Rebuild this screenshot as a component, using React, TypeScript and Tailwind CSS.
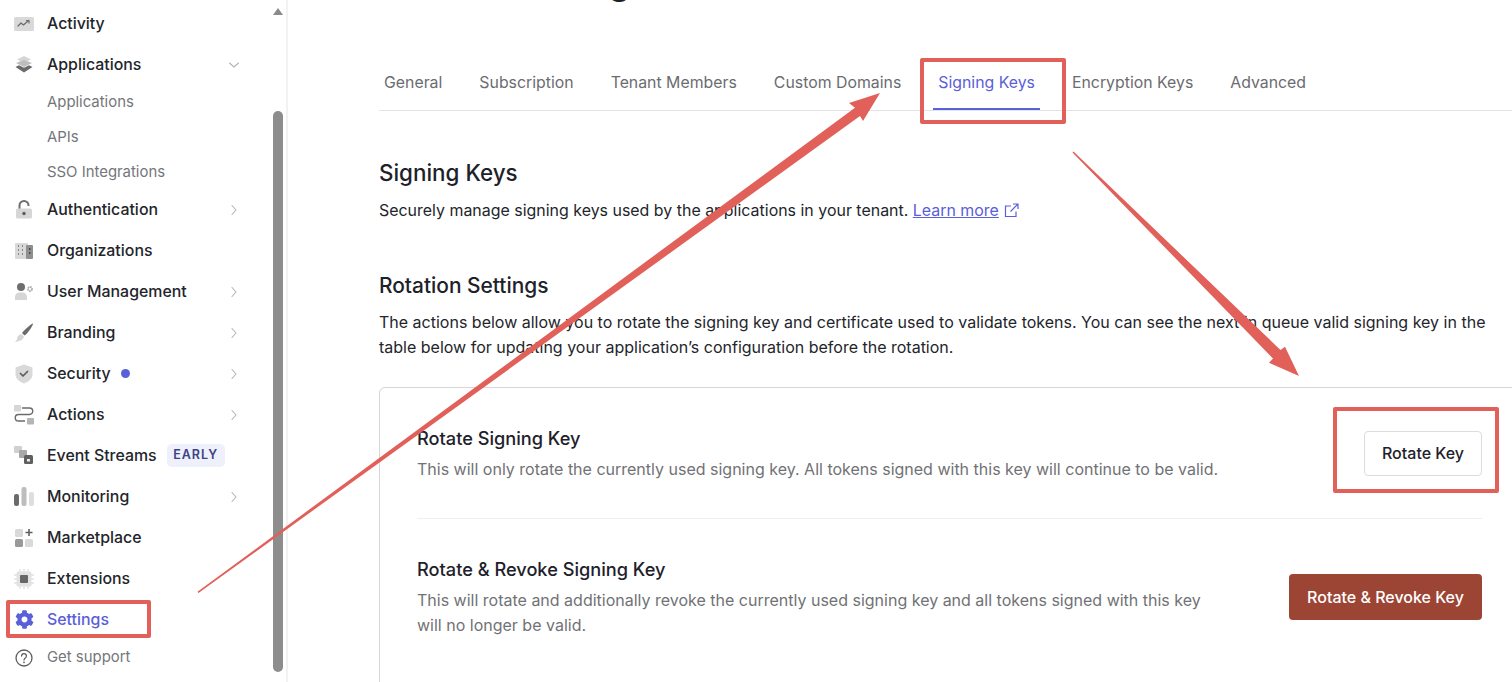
import React from "react";
import { FaCog } from "react-icons/fa";

const Chevron = ({ down }: { down?: boolean }) => (
  <svg width="12" height="12" viewBox="0 0 12 12" fill="none" stroke="#b4b4b8" strokeWidth="1.1" strokeLinecap="round" strokeLinejoin="round">
    {down ? <path d="M1.5 4l4.5 4 4.5-4" /> : <path d="M4 1.5l4 4.5-4 4.5" />}
  </svg>
);

const I = ({ children }: { children: React.ReactNode }) => (
  <svg width="20" height="20" viewBox="0 0 20 20" fill="none">{children}</svg>
);

const icons: Record<string, React.ReactNode> = {
  activity: (
    <I>
      <rect x="0" y="3" width="20" height="14" rx="1.5" fill="#d9d9d9" />
      <path d="M4 12l3-3 2.5 2 5-4.5M12.5 6.5H15V9" stroke="#6b6b6b" strokeWidth="1.2" fill="none" strokeLinecap="round" strokeLinejoin="round" />
    </I>
  ),
  apps: (
    <I>
      <path d="M10 1l7 3.5-7 3.5-7-3.5z" fill="#d6d6d6" />
      <path d="M2 8l8-3 8 3-8 4z" fill="#bdbdbd" />
      <path d="M1.5 12L5 10.3l5 2.5 5-2.5 3.5 1.7L10 17.5z" fill="#6b6b6b" />
    </I>
  ),
  auth: (
    <I>
      <path d="M5.5 9V5.5a4.5 4.5 0 0 1 9 0V6" stroke="#6e6e6e" strokeWidth="2" fill="none" />
      <rect x="2" y="8.5" width="16" height="10" rx="1.5" fill="#d6d6d6" />
      <circle cx="10" cy="13.5" r="1.7" fill="#5c5c5c" />
    </I>
  ),
  orgs: (
    <I>
      <rect x="1" y="2" width="13" height="16" rx="1" fill="#d9d9d9" />
      <rect x="12" y="4" width="7" height="14" rx="1" fill="#8f8f8f" />
      <path d="M4 5h1M8 5h1M4 9h1M8 9h1M4 13h1M8 13h1" stroke="#6b6b6b" strokeWidth="1.7" />
      <path d="M15 8h1.5M15 12h1.5" stroke="#333" strokeWidth="1.5" />
    </I>
  ),
  users: (
    <I>
      <circle cx="7" cy="5" r="4" fill="#6e6e6e" />
      <path d="M1 18v-3a4.5 4.5 0 0 1 4.5-4.5h3A4.5 4.5 0 0 1 13 15v3z" fill="#d6d6d6" />
      <circle cx="16" cy="7" r="2" stroke="#b0b0b0" strokeWidth="1.8" strokeDasharray="1.6 .5" fill="none" />
    </I>
  ),
  brush: (
    <I>
      <path d="M19 .5c.5 1-5 10-8.5 12L8 10C10 7 17.5.5 19 .5z" fill="#6b6b6b" />
      <path d="M7 11l3 2.5c-.5 3-4 5-9 5.5 2-1.5 2-3 2.5-5 .5-1.5 2-2.5 3.5-3z" fill="#d6d6d6" />
    </I>
  ),
  shield: (
    <I>
      <path d="M10 .5l8.5 3v7c0 4-4 7.5-8.5 9-4.5-1.5-8.5-5-8.5-9v-7z" fill="#d9d9d9" />
      <path d="M6.5 9.5l2.5 2.5 4.5-4.5" stroke="#5c5c5c" strokeWidth="1.7" fill="none" strokeLinecap="round" strokeLinejoin="round" />
    </I>
  ),
  actions: (
    <I>
      <rect x="0" y="0" width="7" height="6.5" rx="1" fill="#d6d6d6" />
      <rect x="13" y="13" width="7" height="6.5" rx="1" fill="#b5b5b5" />
      <path d="M8 3h7.5a2.8 2.8 0 0 1 0 6.5h-11a3.2 3.2 0 0 0 0 6.5H11" stroke="#6b6b6b" strokeWidth="1.4" fill="none" />
    </I>
  ),
  streams: (
    <I>
      <rect x="0" y="0" width="8" height="7" rx="1" fill="#d0d0d0" />
      <rect x="5" y="4" width="8" height="8" rx="1" fill="#a8a8a8" />
      <rect x="10" y="9" width="9" height="9" rx="1.5" fill="#5f5f5f" />
      <rect x="13" y="13" width="3" height="2.5" fill="#eee" />
    </I>
  ),
  monitor: (
    <I>
      <rect x="0" y="7" width="5" height="12" rx="2" fill="#6b6b6b" />
      <rect x="7.5" y="0" width="5" height="19" rx="2" fill="#bdbdbd" />
      <rect x="15" y="5" width="5" height="14" rx="2" fill="#dedede" />
    </I>
  ),
  market: (
    <I>
      <rect x="1" y="1" width="8" height="8" rx="1.5" fill="#d9d9d9" />
      <rect x="1" y="11" width="8" height="8" rx="1.5" fill="#999" />
      <rect x="11" y="11" width="8" height="8" rx="1.5" fill="#d9d9d9" />
      <path d="M15 1v7M11.5 4.5h7" stroke="#5f5f5f" strokeWidth="1.6" />
    </I>
  ),
  ext: (
    <I>
      <rect x="2.5" y="2.5" width="15" height="15" rx="1.5" fill="#e2e2e2" />
      <path d="M6 0v20M10 0v20M14 0v20M0 6h20M0 10h20M0 14h20" stroke="#e2e2e2" strokeWidth="1.3" />
      <rect x="6" y="6" width="8" height="8" rx="1" fill="#666" />
    </I>
  ),
  help: (
    <I>
      <circle cx="10" cy="10" r="8" stroke="#5c5c5c" strokeWidth="1.3" fill="none" />
      <path d="M7.6 8a2.4 2.4 0 1 1 3.7 2c-.9.6-1.3 1-1.3 1.9" stroke="#5c5c5c" strokeWidth="1.3" fill="none" strokeLinecap="round" />
      <circle cx="10" cy="14.3" r=".9" fill="#5c5c5c" />
    </I>
  ),
};

type Item = { icon: string; label: string; chev?: "r" | "d"; dot?: boolean; badge?: string };

const Row = ({ icon, label, chev, dot, badge }: Item) => (
  <div className="flex items-center h-[41px] pl-[14px] pr-[30px]">
    <span className="w-[33px] flex-none flex items-center">{icons[icon]}</span>
    <span className="text-[15.9px] font-medium text-[#23252b] whitespace-nowrap">{label}</span>
    {dot && <span className="ml-[10px] w-[9px] h-[9px] rounded-full bg-[#5a60d8]" />}
    {badge && (
      <span className="ml-[10px] h-[23px] w-[58px] flex items-center justify-center rounded-[5px] bg-[#eef0fb] text-[#3d4285] text-[12.5px] font-semibold tracking-[1px]">
        {badge}
      </span>
    )}
    <span className="flex-1" />
    {chev && <Chevron down={chev === "d"} />}
  </div>
);

const Sub = ({ label }: { label: string }) => (
  <div className="h-[35px] pl-[47px] flex items-center text-[14.9px] text-[#75767b]">{label}</div>
);

const Tab = ({ label, active }: { label: string; active?: boolean }) => (
  <div className={`relative h-[54px] px-[5px] mr-[27px] flex items-center text-[15.85px] whitespace-nowrap ${active ? "text-[#5a60d8]" : "text-[#6b6c70]"}`}>
    {label}
    {active && <span className="absolute left-0 right-0 bottom-0 h-[2px] bg-[#5a60d8]" />}
  </div>
);

export default function App() {
  return (
    <div className="relative flex w-[1512px] h-[682px] overflow-hidden bg-white font-['Inter',sans-serif]">
      <aside className="flex-none flex w-[288px] h-[682px] border-r-2 border-[#f2f2f2]">
        <nav className="w-[270px] mt-[3px]">
          <Row icon="activity" label="Activity" />
          <Row icon="apps" label="Applications" chev="d" />
          <Sub label="Applications" />
          <Sub label="APIs" />
          <Sub label="SSO Integrations" />
          <div className="-mt-[1px]" />
          <Row icon="auth" label="Authentication" chev="r" />
          <Row icon="orgs" label="Organizations" />
          <Row icon="users" label="User Management" chev="r" />
          <Row icon="brush" label="Branding" chev="r" />
          <Row icon="shield" label="Security" chev="r" dot />
          <Row icon="actions" label="Actions" chev="r" />
          <Row icon="streams" label="Event Streams" badge="EARLY" />
          <Row icon="monitor" label="Monitoring" chev="r" />
          <Row icon="market" label="Marketplace" />
          <Row icon="ext" label="Extensions" />
          <div className="flex items-center h-[41px] pl-[14px]">
            <span className="w-[33px] pl-[1px] flex-none flex items-center">
              <FaCog size={19} color="#5a60d8" />
            </span>
            <span className="text-[15.9px] font-medium text-[#5a60d8]">Settings</span>
          </div>
          <div className="flex items-center h-[35px] pl-[14px]">
            <span className="w-[33px] flex-none flex items-center">{icons.help}</span>
            <span className="text-[14.9px] text-[#75767b]">Get support</span>
          </div>
        </nav>
        <div className="w-[10px] ml-[3px] flex flex-col items-center pt-[8px]">
          <div className="w-0 h-0 border-l-[5px] border-r-[5px] border-b-[7px] border-l-transparent border-r-transparent border-b-[#8a8a8a]" />
          <div className="mt-[96px] w-[10px] flex-none h-[561px] rounded-[5px] bg-[#8d8d8d]" />
        </div>
      </aside>

      <main className="flex-1 min-w-0 pl-[91px]">
        <div className="-mt-[43px] h-[56px] text-[36.5px] font-medium leading-[48px] text-[#1e212a] whitespace-nowrap">Tenant Settings</div>
        <div className="flex h-[55px] mt-[43px] border-b border-[#e4e4e6] -mr-[20px]">
          <Tab label="General" />
          <Tab label="Subscription" />
          <Tab label="Tenant Members" />
          <Tab label="Custom Domains" />
          <Tab label="Signing Keys" active />
          <Tab label="Encryption Keys" />
          <Tab label="Advanced" />
        </div>

        <h2 className="mt-[45px] text-[22.4px] leading-[34px] font-medium text-[#1e212a]">Signing Keys</h2>
        <p className="mt-[8px] text-[15.95px] leading-[26px] text-[#23252b]">
          Securely manage signing keys used by the applications in your tenant.{" "}
          <span className="text-[#5a60d8] underline">Learn more</span>
          <svg className="inline-block ml-[5px] -mt-[3px]" width="15" height="15" viewBox="0 0 15 15" fill="none" stroke="#5a60d8" strokeWidth="1.2">
            <path d="M12 8.5V13.5H1.5V3H7M9 1h5v5M14 1L6.5 8.5" />
          </svg>
        </p>

        <h2 className="mt-[46px] text-[20.9px] leading-[32px] font-medium text-[#1e212a]">Rotation Settings</h2>
        <p className="mt-[8px] w-[1125px] text-[16px] leading-[25px] text-[#23252b]">
          The actions below allow you to rotate the signing key and certificate used to validate tokens. You can see the next in queue valid signing key in the table below for updating your application’s configuration before the rotation.
        </p>

        <section className="mt-[27px] w-[1140px] h-[320px] rounded-t-[6px] border border-[#d6d6d8] pl-[37px] pr-[36px]">
          <div className="flex items-center justify-between h-[131px] border-b border-[#efefef]">
            <div>
              <h3 className="text-[18.2px] leading-[24px] font-medium text-[#1e212a]">Rotate Signing Key</h3>
              <p className="mt-[7px] text-[16px] leading-[24px] text-[#717275]">
                This will only rotate the currently used signing key. All tokens signed with this key will continue to be valid.
              </p>
            </div>
            <button className="h-[45px] w-[118px] rounded-[4px] border border-[#dcdcde] bg-white text-[16px] font-medium text-[#1e212a]">Rotate Key</button>
          </div>
          <div className="flex items-center justify-between h-[156px]">
            <div>
              <h3 className="text-[18.2px] leading-[24px] font-medium text-[#1e212a]">Rotate &amp; Revoke Signing Key</h3>
              <p className="mt-[7px] w-[800px] text-[16px] leading-[25px] text-[#717275]">
                This will rotate and additionally revoke the currently used signing key and all tokens signed with this key will no longer be valid.
              </p>
            </div>
            <button className="h-[46px] w-[193px] rounded-[4px] bg-[#9c4535] text-[16px] font-medium text-white">Rotate &amp; Revoke Key</button>
          </div>
        </section>
      </main>

      {/* annotations */}
      <svg className="absolute inset-0 pointer-events-none" width="1512" height="682" viewBox="0 0 1512 682" fill="#e2605a">
        <path d="M197.5 591.8L855 107.7l-6-4.700 31-10-17 28-3-5L198.5 593z" />
        <path d="M1073.5 151.5L1280.5 350l4.500-3.300L1299 376l-30-13.300 4-4.200L1072.5 152.5z" />
      </svg>
      <div className="absolute left-[920px] top-[58px] w-[146px] h-[66px] border-[4px] border-[#e2605a] rounded-[2px]" />
      <div className="absolute left-[1333px] top-[407px] w-[166px] h-[86px] border-[4px] border-[#e2605a] rounded-[2px]" />
      <div className="absolute left-[6px] top-[600px] w-[145px] h-[38px] border-[4px] border-[#e2605a] rounded-[2px]" />
    </div>
  );
}
